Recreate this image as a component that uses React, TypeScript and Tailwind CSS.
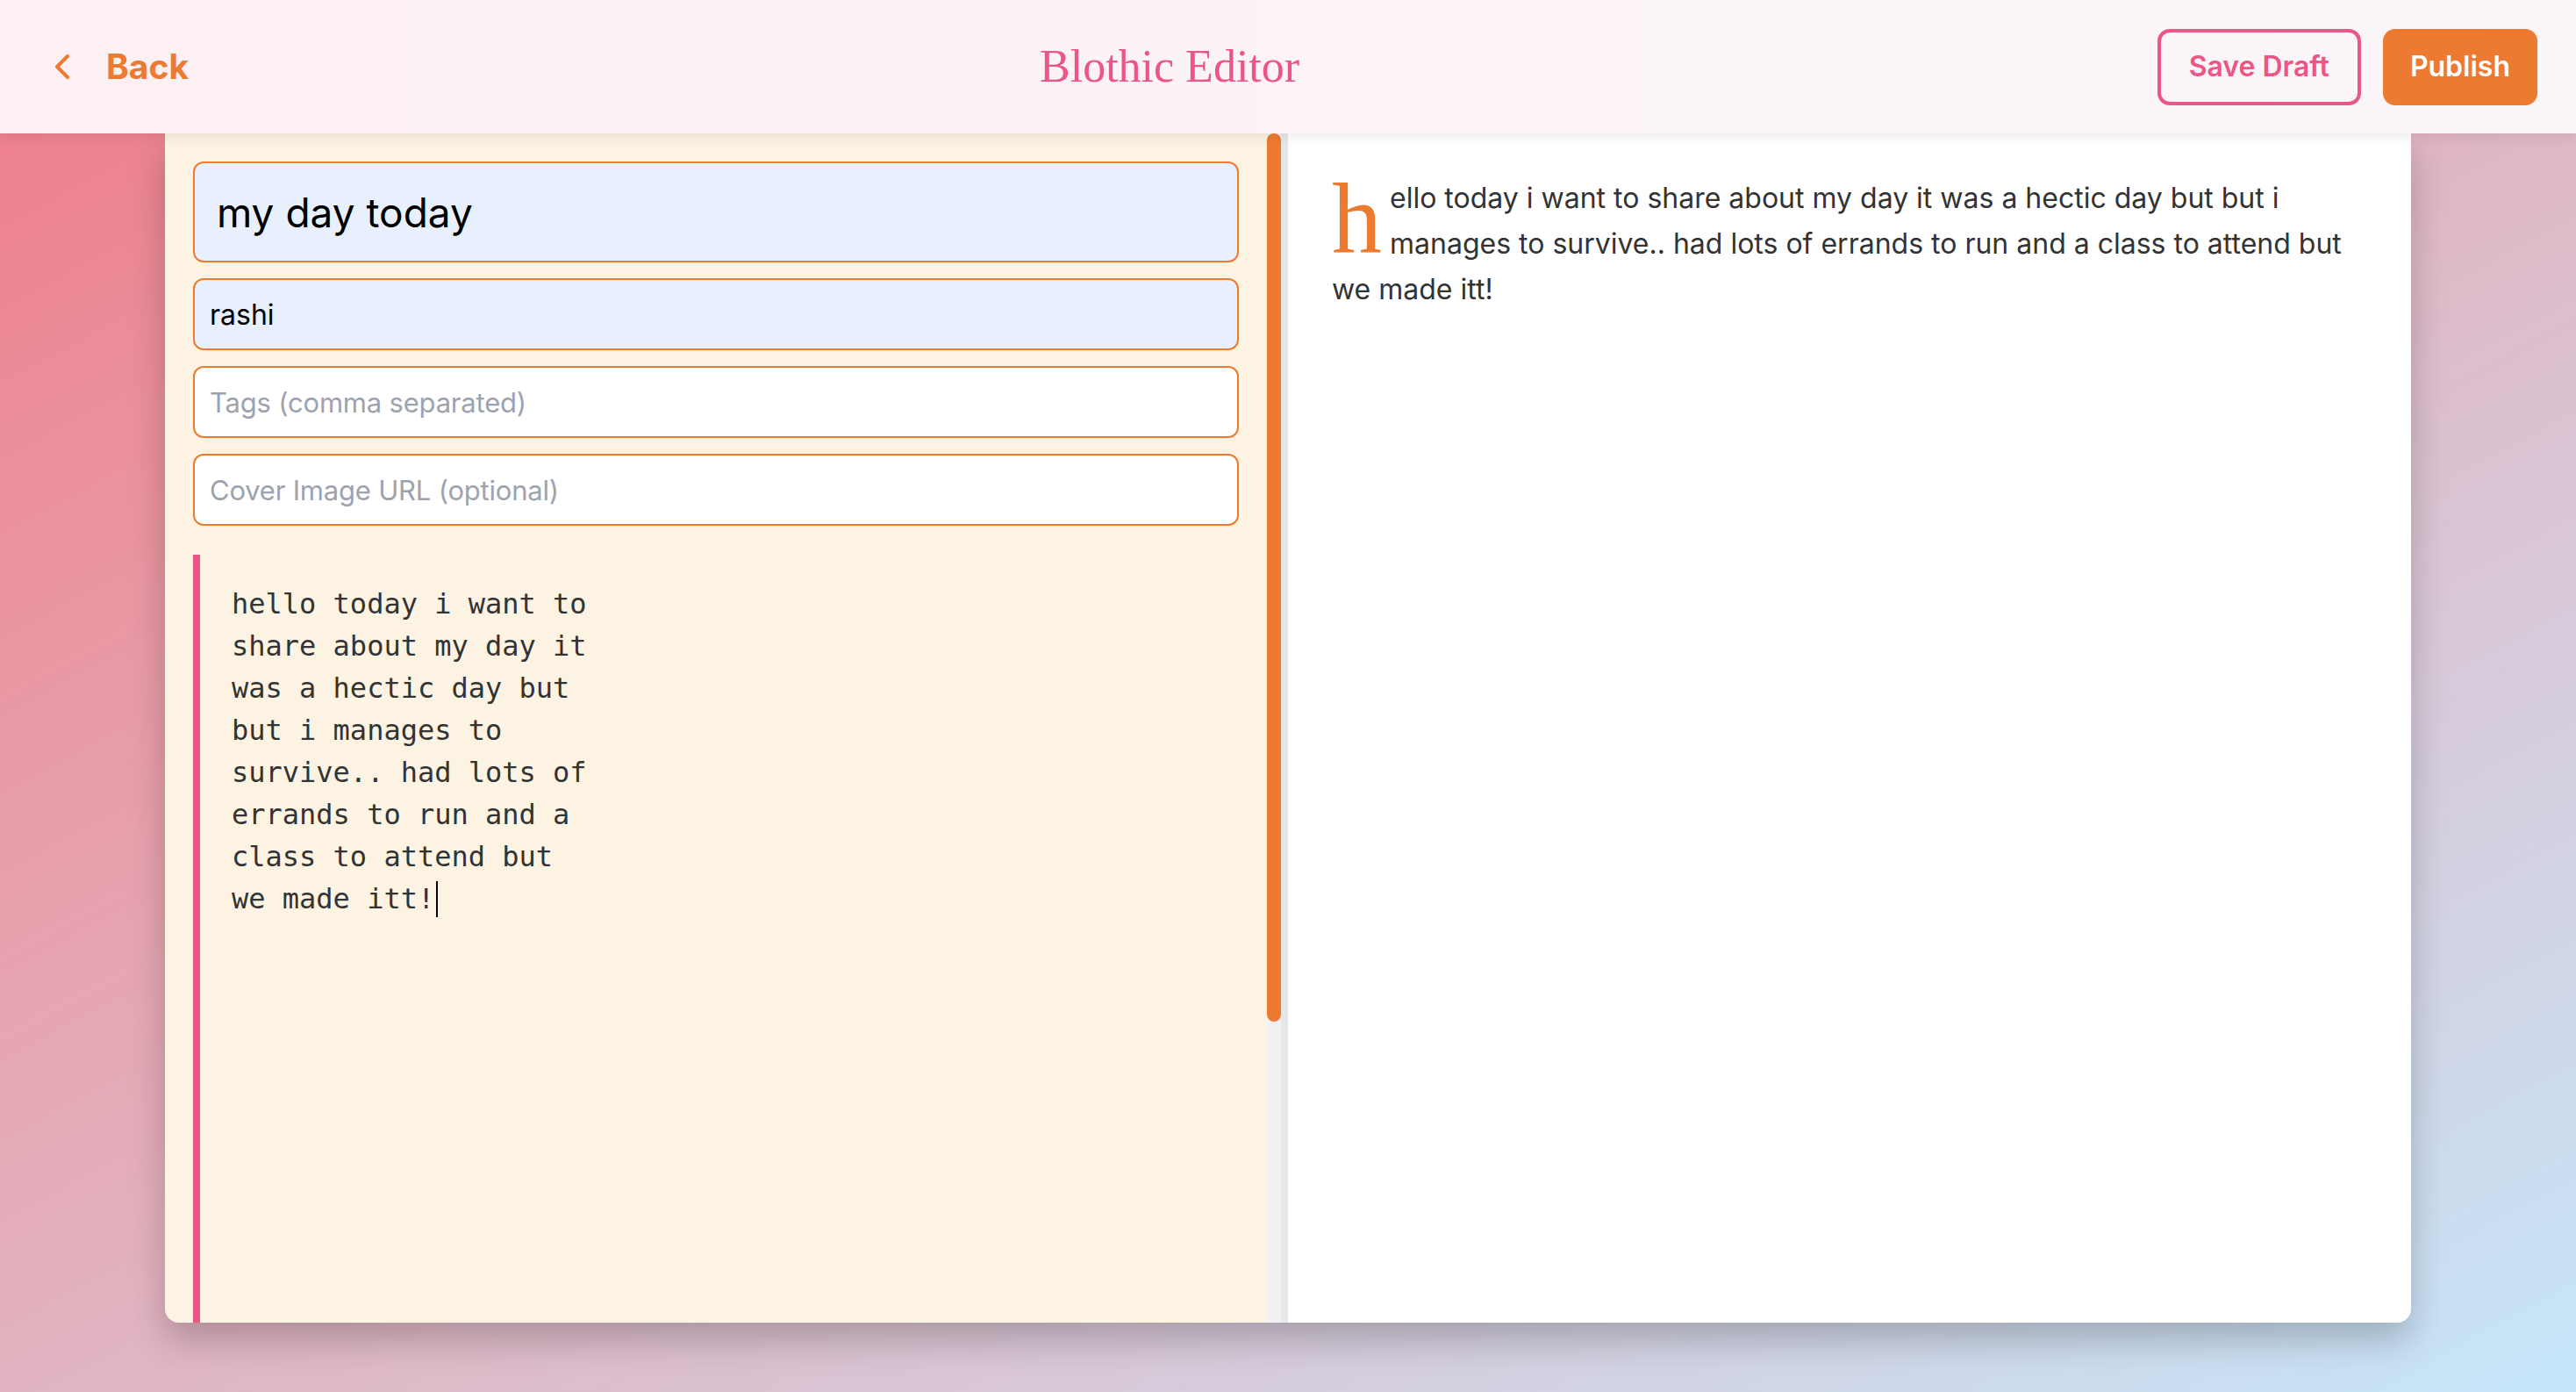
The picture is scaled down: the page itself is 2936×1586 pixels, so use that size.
import { ChevronLeft } from "lucide-react";

const body =
  "hello today i want to share about my day it was a hectic day but but i manages to survive.. had lots of errands to run and a class to attend but we made itt!";

function Header() {
  return (
    <header className="relative z-10 flex h-[152px] items-center bg-gradient-to-r from-[#fdf0f3] to-[#faf6f9] pl-[47px] pr-[44px] shadow-[0_4px_14px_rgba(0,0,0,0.08)]">
      <button className="flex items-center gap-[26px] text-[39px] font-bold text-[#ed7a31]">
        <ChevronLeft size={48} strokeWidth={2} />
        <span>Back</span>
      </button>
      <h1 className="ml-[970px] font-['Liberation_Serif',serif] text-[52px] leading-none text-[#ec5585]">
        Blothic Editor
      </h1>
      <div className="ml-auto flex items-center gap-[25px] text-[32px] font-semibold">
        <button className="h-[87px] rounded-[14px] border-4 border-[#ec5585] px-[32px] text-[#ec5585]">
          Save Draft
        </button>
        <button className="h-[87px] rounded-[14px] bg-[#ed7a31] px-[31px] text-white">
          Publish
        </button>
      </div>
    </header>
  );
}

function EditorPane() {
  return (
    <div className="flex min-h-0 border-r-8 border-[#e5e7eb] bg-[#fcf3e2]">
      <div className="flex min-w-0 flex-1 flex-col gap-[18px] px-[32px] pt-[32px]">
        <input
          readOnly
          value="my day today"
          className="h-[115px] w-full rounded-[12px] border-2 border-[#ed7a31] bg-[#e8f0fe] px-[25px] text-[46px] text-black outline-none"
        />
        <input
          readOnly
          value="rashi"
          className="h-[82px] w-full rounded-[12px] border-2 border-[#ed7a31] bg-[#e8f0fe] px-[17px] text-[32px] text-black outline-none"
        />
        <input
          readOnly
          placeholder="Tags (comma separated)"
          className="h-[82px] w-full rounded-[12px] border-2 border-[#ed7a31] bg-white px-[17px] text-[31px] tracking-[-0.2px] outline-none placeholder:text-[#9ca3af]"
        />
        <input
          readOnly
          placeholder="Cover Image URL (optional)"
          className="h-[82px] w-full rounded-[12px] border-2 border-[#ed7a31] bg-white px-[17px] text-[31px] tracking-[-0.2px] outline-none placeholder:text-[#9ca3af]"
        />
        <div className="mt-[15px] flex-1 border-l-8 border-[#ec5585] pl-[36px] pt-[32px]">
          <p className="w-[414px] whitespace-pre-wrap font-['DejaVu_Sans_Mono',monospace] text-[32px] leading-[48px] text-[#333333]">
            {body}
            <span className="ml-[2px] inline-block h-[41px] w-[2px] bg-black align-[-10px]" />
          </p>
        </div>
      </div>
      <div className="w-[16px] bg-[#f1f1f1]">
        <div className="h-[1012px] rounded-full bg-[#ed7a31]" />
      </div>
    </div>
  );
}

function PreviewPane() {
  return (
    <div className="bg-white py-[48px] pl-[50px] pr-[48px]">
      <p className="text-[32px] leading-[52px] text-[#333333]">
        <span className="float-left mr-[9px] font-['Liberation_Serif',serif] text-[114px] leading-[97px] text-[#ed7a31]">
          h
        </span>
        {body.slice(1)}
      </p>
    </div>
  );
}

export default function App() {
  return (
    <div className="flex min-h-screen flex-col bg-gradient-to-br from-[#ee7b88] to-[#c5e6fa] font-['Inter',sans-serif]">
      <Header />
      <main className="flex justify-center">
        <div className="grid h-[1355px] w-[2560px] grid-cols-2 overflow-hidden rounded-b-[16px] shadow-[0_20px_40px_rgba(0,0,0,0.22)]">
          <EditorPane />
          <PreviewPane />
        </div>
      </main>
    </div>
  );
}
